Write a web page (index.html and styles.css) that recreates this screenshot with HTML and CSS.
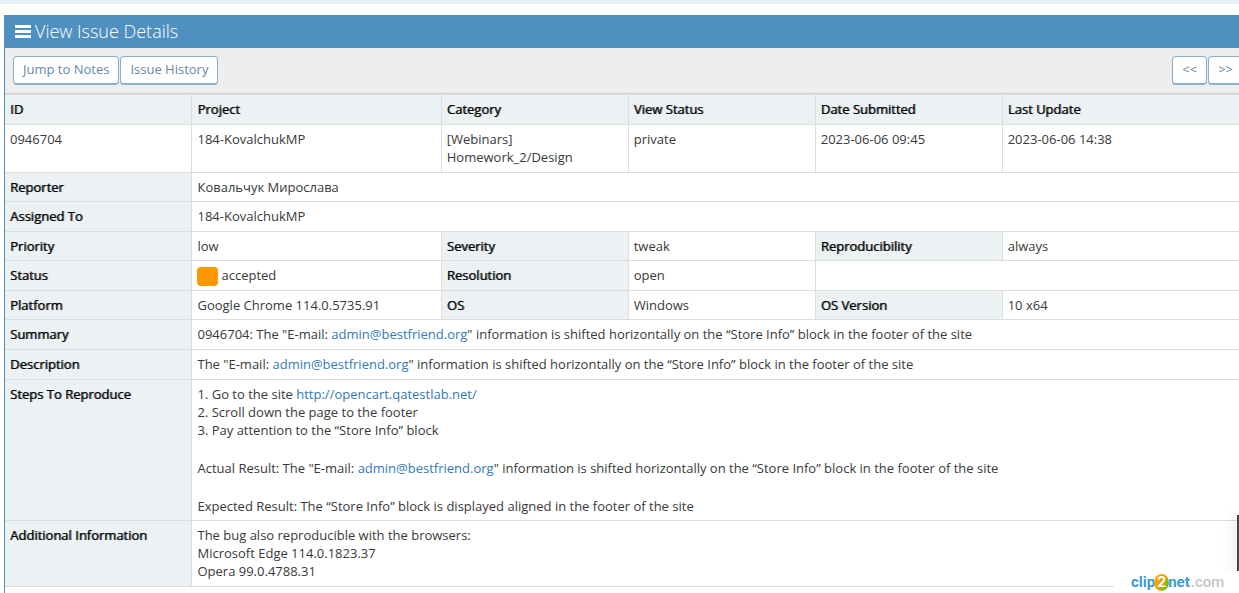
FILE: index.html
```html
<!DOCTYPE html>
<html lang="en">
<head>
<meta charset="utf-8">
<title>View Issue Details</title>
<link rel="stylesheet" href="styles.css">
</head>
<body>
<div class="topbar"></div>
<main class="widget">
  <header class="widget-header">
    <svg class="menu-icon" width="16" height="13" viewBox="0 0 16 13" aria-hidden="true"><path fill="#fff" d="M0 0h16v3H0zM0 5h16v3H0zM0 10h16v3H0z"/></svg>
    <h1 class="widget-title">View Issue Details</h1>
  </header>
  <nav class="toolbar">
    <div class="button-group">
      <button class="btn" type="button">Jump to Notes</button>
      <button class="btn" type="button">Issue History</button>
    </div>
    <div class="button-group">
      <button class="btn" type="button">&lt;&lt;</button>
      <button class="btn" type="button">&gt;&gt;</button>
    </div>
  </nav>
  <table class="issue">
    <colgroup><col class="col-label"><col class="col-wide"><col class="col-label"><col class="col-label"><col class="col-label"><col class="col-wide"></colgroup>
    <tbody>
      <tr><th scope="col">ID</th><th scope="col">Project</th><th scope="col">Category</th><th scope="col">View Status</th><th scope="col">Date Submitted</th><th scope="col">Last Update</th></tr>
      <tr><td>0946704</td><td>184-KovalchukMP</td><td>[Webinars] Homework_2/Design</td><td>private</td><td>2023-06-06 09:45</td><td>2023-06-06 14:38</td></tr>
      <tr class="tight"><th scope="row">Reporter</th><td colspan="5">Ковальчук Мирослава</td></tr>
      <tr><th scope="row">Assigned To</th><td colspan="5">184-KovalchukMP</td></tr>
      <tr class="tight"><th scope="row">Priority</th><td>low</td><th scope="row">Severity</th><td>tweak</td><th scope="row">Reproducibility</th><td>always</td></tr>
      <tr><th scope="row">Status</th><td><div class="status"><span class="status-color"></span>accepted</div></td><th scope="row">Resolution</th><td>open</td><td colspan="2"></td></tr>
      <tr class="tight"><th scope="row">Platform</th><td>Google Chrome 114.0.5735.91</td><th scope="row">OS</th><td>Windows</td><th scope="row">OS Version</th><td>10 x64</td></tr>
      <tr><th scope="row">Summary</th><td colspan="5">0946704: The "E-mail: <a href="mailto:admin@bestfriend.org">admin@bestfriend.org</a>" information is shifted horizontally on the “Store Info” block in the footer of the site</td></tr>
      <tr><th scope="row">Description</th><td colspan="5">The "E-mail: <a href="mailto:admin@bestfriend.org">admin@bestfriend.org</a>" information is shifted horizontally on the “Store Info” block in the footer of the site</td></tr>
      <tr class="tight"><th scope="row">Steps To Reproduce</th><td colspan="5"><div class="steps">
        <p>1. Go to the site <a href="http://opencart.qatestlab.net/">http://opencart.qatestlab.net/</a><br>2. Scroll down the page to the footer<br>3. Pay attention to the “Store Info” block</p>
        <p>Actual Result: The "E-mail: <a href="mailto:admin@bestfriend.org">admin@bestfriend.org</a>" information is shifted horizontally on the “Store Info” block in the footer of the site</p>
        <p>Expected Result: The “Store Info” block is displayed aligned in the footer of the site</p>
      </div></td></tr>
      <tr><th scope="row">Additional Information</th><td colspan="5">The bug also reproducible with the browsers:<br>Microsoft Edge 114.0.1823.37<br>Opera 99.0.4788.31</td></tr>
    </tbody>
  </table>
</main>
<div class="edge-panel"></div>
<div class="watermark"><span class="mark-name">clip</span><span class="mark-two">2</span><span class="mark-name">net</span><span class="mark-domain">.com</span></div>
</body>
</html>
```
FILE: styles.css
```css
* { box-sizing: border-box; }

body {
  margin: 0;
  min-height: 100vh;
  display: flex;
  flex-direction: column;
  overflow: hidden;
  background: #fff;
  color: #393939;
  font: 13px/18px "Open Sans", "Noto Sans", sans-serif;
}

.topbar {
  height: 4px;
  margin-bottom: 11px;
  background: #e6f0f7;
}

/* The panel is wider than the window and runs off its right edge. */
.widget {
  flex: 1;
  margin: 0 -13px 0 4px;
  border-left: 1px solid #4f90c1;
}

.widget-header {
  display: flex;
  align-items: center;
  gap: 4px;
  height: 33px;
  padding-left: 10px;
  background: #4f90c1;
  color: #fff;
}

.widget-title {
  margin: 0;
  padding-bottom: 1px;
  font-size: 18px;
  line-height: 32px;
  font-weight: 300;
}

.toolbar {
  display: flex;
  justify-content: space-between;
  padding: 8px 9px 8px 8px;
  border-bottom: 1px solid #ccc;
  background: #eee;
}

.button-group {
  display: flex;
  gap: 1px;
}

.btn {
  height: 29px;
  padding: 0 9px 2px;
  border: 1px solid #8aafce;
  border-bottom-width: 2px;
  border-radius: 4px;
  background: #fff;
  color: #6688a6;
  font: inherit;
}

.issue {
  width: 100%;
  table-layout: fixed;
  border-collapse: collapse;
}

.col-label { width: 15%; }
.col-wide { width: 20%; }

.issue th,
.issue td {
  padding: 5px 5px 6px;
  border: 1px solid #ddd;
  text-align: left;
  vertical-align: top;
}

.issue .tight > * { padding-bottom: 5px; }

.issue tr > :first-child { border-left: 0; }

.issue th {
  background: #ecf2f4;
  color: #000;
  font-weight: 400;
  text-shadow: 1px 0 rgba(0, 0, 0, 0.6);
}

a {
  color: #337ab7;
  text-decoration: none;
}

.status {
  display: flex;
  align-items: center;
  gap: 3px;
}

.status-color {
  width: 21px;
  height: 19px;
  margin-bottom: -3px;
  border-radius: 4px;
  background: #ff9800;
}

.steps {
  display: grid;
  gap: 20px;
}

.steps p { margin: 0; }

.edge-panel {
  position: absolute;
  right: 0;
  bottom: 22px;
  width: 2px;
  height: 56px;
  background: #444;
  box-shadow: 0 0 14px rgba(0, 0, 0, 0.4);
}

.watermark {
  position: absolute;
  right: 0;
  bottom: 0;
  display: flex;
  align-items: center;
  width: 125px;
  height: 22px;
  padding-left: 17px;
  background: #fff;
  font: 15px/22px Roboto, Arial, sans-serif;
}

.mark-name {
  color: #3b9ad9;
  font-weight: 700;
}

.mark-two {
  width: 15px;
  height: 17px;
  margin: 0 -1px;
  border-radius: 50%;
  background: linear-gradient(120deg, #f7c600, #f29a00 45%, #6cc01c 80%);
  color: #fff;
  font-weight: 700;
  line-height: 17px;
  text-align: center;
}

.mark-domain {
  margin-left: 1px;
  color: #c3c3cb;
  font-weight: 500;
}
```
